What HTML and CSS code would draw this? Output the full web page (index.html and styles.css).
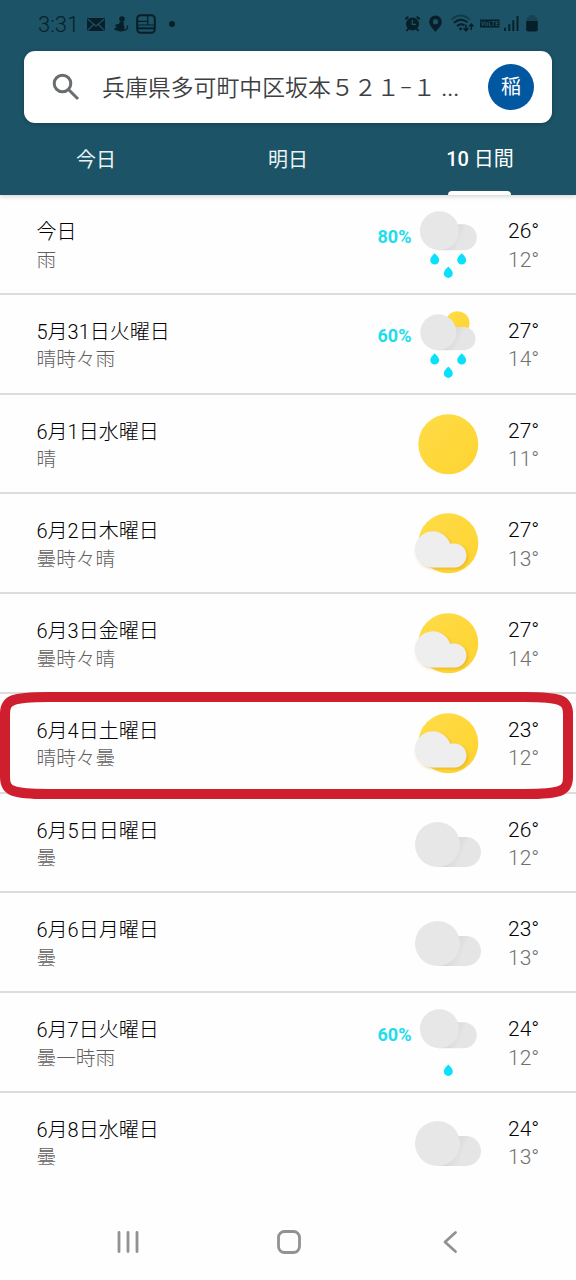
FILE: index.html
```html
<!DOCTYPE html>
<html lang="ja">
<head>
    <meta charset="UTF-8">
    <meta name="viewport" content="width=device-width, initial-scale=1.0">
    <title>天気 - 10 日間</title>
    <link rel="stylesheet" href="styles.css">
</head>
<body>
    <!-- Shared weather icons -->
    <svg class="defs" width="0" height="0">
        <defs>
            <linearGradient id="sun-fill" x1="0" y1="0" x2="1" y2="1">
                <stop offset="0" stop-color="#ffdc48"/>
                <stop offset="1" stop-color="#fdd32f"/>
            </linearGradient>
            <linearGradient id="puff-fill" x1="0" y1="0" x2="1" y2="0.3">
                <stop offset="0.45" stop-color="#d9d9d9"/>
                <stop offset="0.7" stop-color="#e5e5e5"/>
            </linearGradient>
            <filter id="soft" x="-20%" y="-20%" width="150%" height="150%">
                <feDropShadow dx="1.5" dy="1.5" stdDeviation="1.5" flood-color="#d08a00" flood-opacity="0.4"/>
            </filter>
            <path id="drop" fill="#0ae0fa" d="M0-5.800C1.600-4 4.500-1.600 4.500 1.100A4.500 4.500 0 0 1-4.500 1.100C-4.500-1.600-1.600-4 0-5.800Z"/>
            <g id="rain-cloud">
                <path fill="url(#puff-fill)" d="M27 55.300V29.200H51.700A13 13 0 0 1 51.700 55.300Z"/>
                <circle cx="27.400" cy="35.800" r="19.500" fill="#e7e7e7"/>
            </g>
        </defs>
        <symbol id="rain" viewBox="0 0 72 98">
            <use href="#rain-cloud"/>
            <use href="#drop" x="22.700" y="64"/>
            <use href="#drop" x="49.700" y="64"/>
            <use href="#drop" x="36.300" y="77.300"/>
        </symbol>
        <symbol id="light-rain" viewBox="0 0 72 98">
            <use href="#rain-cloud"/>
            <use href="#drop" x="36.300" y="77.300"/>
        </symbol>
        <symbol id="sun-rain" viewBox="0 0 72 98">
            <circle cx="45.500" cy="28.200" r="12" fill="url(#sun-fill)"/>
            <path fill="url(#puff-fill)" d="M26 55.300V32H53A11.700 11.700 0 0 1 53 55.300Z"/>
            <circle cx="26.300" cy="37.300" r="18" fill="#e7e7e7"/>
            <use href="#drop" x="22.700" y="64"/>
            <use href="#drop" x="49.700" y="64"/>
            <use href="#drop" x="36.300" y="77.300"/>
        </symbol>
        <symbol id="sun" viewBox="0 0 72 98">
            <circle cx="36.300" cy="49.300" r="30" fill="url(#sun-fill)"/>
        </symbol>
        <symbol id="sun-cloud" viewBox="0 0 72 98">
            <circle cx="36.300" cy="49.300" r="30" fill="url(#sun-fill)"/>
            <path fill="#eee" filter="url(#soft)" d="M21 73.400A18 18 0 1 1 38 49.800Q40 49.400 42.400 49.400A12 12 0 0 1 42.400 73.400Z"/>
        </symbol>
        <symbol id="cloud" viewBox="0 0 72 98">
            <path fill="url(#puff-fill)" d="M25 73V43H54A15 15 0 0 1 54 73Z"/>
            <circle cx="25.500" cy="50.500" r="22.500" fill="#e7e7e7"/>
        </symbol>
    </svg>

    <header class="header">
        <div class="status-bar">
            <div class="status-left">
                <span class="clock">3:31</span>
                <svg class="mail" width="18" height="13" viewBox="0 0 18 13">
                    <path d="M0 0H18V13H0Z" fill="currentColor"/>
                    <path d="M0.500 1L9 8L17.500 1M0.500 12.500L6.500 6.500M17.500 12.500L11.500 6.500" fill="none" stroke="#1c5367" stroke-width="1.100"/>
                </svg>
                <svg class="figure" width="15" height="16" viewBox="0 0 15 16">
                    <circle cx="8" cy="3" r="2.800" fill="currentColor"/>
                    <path d="M6 5.500L10 6Q9 8 10 9.500Q11.500 12 10 14.500Q8 16 4 15L0 13.500Q0.500 11.500 3 11L0.800 9.500Q2 7.500 5 8Z" fill="currentColor"/>
                    <path d="M9 14Q14 15 13.500 9.500" fill="none" stroke="currentColor" stroke-width="1.400"/>
                </svg>
                <svg class="news" width="20" height="20" viewBox="0 0 20 20" fill="none" stroke="currentColor">
                    <rect x="1.200" y="1.200" width="17.600" height="17.600" rx="3.500" stroke-width="2"/>
                    <path d="M1 14.300H19" stroke-width="2"/>
                    <path d="M11.800 2V11.500M2 7.300H11.500M2 11H18" stroke-width="1.200"/>
                </svg>
                <span class="more-dot"></span>
            </div>
            <svg class="status-right" width="136" height="20" viewBox="0 0 136 20" fill="none" stroke="currentColor">
                <!-- alarm -->
                <circle cx="8.500" cy="10" r="6.500" fill="currentColor" stroke="none"/>
                <path d="M1.300 5.300L4.300 2.800M12.700 2.800L15.700 5.300M4.500 14.500L2.500 17M12.500 14.500L14.500 17" stroke-width="2"/>
                <path d="M8.300 6V10.300H12" stroke="#1c5367" stroke-width="1.300"/>
                <!-- location -->
                <path fill="currentColor" stroke="none" fill-rule="evenodd" d="M31.500 1.500A6.300 6.300 0 0 1 37.800 7.800C37.800 11.500 34 15 31.500 18C29 15 25.200 11.500 25.200 7.800A6.300 6.300 0 0 1 31.500 1.500ZM31.500 5.100A2.600 2.600 0 1 0 31.500 10.300A2.600 2.600 0 1 0 31.500 5.100Z"/>
                <!-- wifi -->
                <path d="M47.500 5.500Q56.500-2.500 66 5.500" stroke-width="1.900" opacity="0.450"/>
                <path d="M50 8.800Q56.500 2.800 63.500 8.300M53 12Q56.500 8.800 60.500 11.300" stroke-width="2"/>
                <circle cx="56.500" cy="14.800" r="1.500" fill="currentColor" stroke="none"/>
                <path d="M62 10.500V16.500M59.500 14L62 16.800L64.500 14M67.300 16V10.500M65 12.500L67.300 10L69.600 12.500" stroke-width="1.500"/>
                <!-- volte -->
                <path d="M76 5.500H95.500V13.500H76Z" fill="currentColor" stroke="none"/>
                <text class="volte" x="76.800" y="12.200" textLength="18" lengthAdjust="spacingAndGlyphs">VoLTE</text>
                <!-- signal -->
                <path d="M101 13.800V17M105.300 10.300V17M109.300 6.300V17M113.500 2V17" stroke-width="1.900"/>
                <!-- battery -->
                <path d="M122.500 8V4.500Q122.500 3 124.500 3H125V1.200H131V3H131.500Q133.500 3 133.500 4.500V8Z" fill="currentColor" stroke="none" opacity="0.300"/>
                <path d="M122.200 7H133.800V15.500Q133.800 17.500 131.800 17.500H124.200Q122.200 17.500 122.200 15.500Z" fill="currentColor" stroke="none"/>
            </svg>
        </div>

        <div class="search">
            <svg class="search-icon" width="28" height="28" viewBox="0 0 28 28" fill="none" stroke="#6a6d70" stroke-width="3">
                <circle cx="10.500" cy="10.500" r="8.300"/>
                <path d="M16.500 16.500L26 26"/>
            </svg>
            <span class="place">兵庫県多可町中区坂本５２１−１ <span class="dots">...</span></span>
            <span class="avatar">稲</span>
        </div>

        <nav class="tabs">
            <span class="tab">今日</span>
            <span class="tab">明日</span>
            <span class="tab active"><span><b>10</b> 日間</span></span>
        </nav>
    </header>

    <main class="forecast">
        <div class="day">
            <div class="label"><div class="date">今日</div><div class="sky">雨</div></div>
            <span class="chance">80%</span>
            <svg class="icon"><use href="#rain"/></svg>
            <div class="temps"><div class="high">26°</div><div class="low">12°</div></div>
        </div>
        <div class="day">
            <div class="label"><div class="date">5月31日火曜日</div><div class="sky">晴時々雨</div></div>
            <span class="chance">60%</span>
            <svg class="icon"><use href="#sun-rain"/></svg>
            <div class="temps"><div class="high">27°</div><div class="low">14°</div></div>
        </div>
        <div class="day">
            <div class="label"><div class="date">6月1日水曜日</div><div class="sky">晴</div></div>
            <span class="chance"></span>
            <svg class="icon"><use href="#sun"/></svg>
            <div class="temps"><div class="high">27°</div><div class="low">11°</div></div>
        </div>
        <div class="day">
            <div class="label"><div class="date">6月2日木曜日</div><div class="sky">曇時々晴</div></div>
            <span class="chance"></span>
            <svg class="icon"><use href="#sun-cloud"/></svg>
            <div class="temps"><div class="high">27°</div><div class="low">13°</div></div>
        </div>
        <div class="day">
            <div class="label"><div class="date">6月3日金曜日</div><div class="sky">曇時々晴</div></div>
            <span class="chance"></span>
            <svg class="icon"><use href="#sun-cloud"/></svg>
            <div class="temps"><div class="high">27°</div><div class="low">14°</div></div>
        </div>
        <div class="day marked">
            <div class="label"><div class="date">6月4日土曜日</div><div class="sky">晴時々曇</div></div>
            <span class="chance"></span>
            <svg class="icon"><use href="#sun-cloud"/></svg>
            <div class="temps"><div class="high">23°</div><div class="low">12°</div></div>
            <svg class="frame" width="573" height="107" viewBox="0 0 573 107">
                <path d="M5 22C5 8 12 5 48 5H525C561 5 568 8 568 22V85C568 99 561 102 525 102H48C12 102 5 99 5 85Z"/>
            </svg>
        </div>
        <div class="day">
            <div class="label"><div class="date">6月5日日曜日</div><div class="sky">曇</div></div>
            <span class="chance"></span>
            <svg class="icon"><use href="#cloud"/></svg>
            <div class="temps"><div class="high">26°</div><div class="low">12°</div></div>
        </div>
        <div class="day">
            <div class="label"><div class="date">6月6日月曜日</div><div class="sky">曇</div></div>
            <span class="chance"></span>
            <svg class="icon"><use href="#cloud"/></svg>
            <div class="temps"><div class="high">23°</div><div class="low">13°</div></div>
        </div>
        <div class="day">
            <div class="label"><div class="date">6月7日火曜日</div><div class="sky">曇一時雨</div></div>
            <span class="chance">60%</span>
            <svg class="icon"><use href="#light-rain"/></svg>
            <div class="temps"><div class="high">24°</div><div class="low">12°</div></div>
        </div>
        <div class="day">
            <div class="label"><div class="date">6月8日水曜日</div><div class="sky">曇</div></div>
            <span class="chance"></span>
            <svg class="icon"><use href="#cloud"/></svg>
            <div class="temps"><div class="high">24°</div><div class="low">13°</div></div>
        </div>
    </main>

    <footer class="nav-bar">
        <svg width="24" height="24" viewBox="0 0 24 24"><path d="M3 2.500V21.500M12 2.500V21.500M21 2.500V21.500"/></svg>
        <svg width="24" height="24" viewBox="0 0 24 24"><rect x="1.500" y="1.500" width="21" height="21" rx="6"/></svg>
        <svg width="24" height="24" viewBox="0 0 24 24"><path d="M16.500 2.500L6 12L16.500 21.500"/></svg>
    </footer>
</body>
</html>
```
FILE: styles.css
```css
* {
    box-sizing: border-box;
}
body {
    margin: 0;
    height: 1280px;
    display: flex;
    flex-direction: column;
    background-color: #fefefe;
    color: #202124;
    font-family: Roboto, "Noto Sans CJK JP", sans-serif;
    font-size: 20px;
    overflow: hidden;
}
.defs {
    position: absolute;
}
.header {
    height: 195px;
    flex: none;
    background-color: #1c5367;
    box-shadow: 0 1px 5px rgba(0, 0, 0, 0.2);
}
.status-bar {
    height: 51px;
    padding: 0 36px 3px 38px;
    display: flex;
    align-items: center;
    justify-content: space-between;
    color: #071f29;
}
.status-left {
    display: flex;
    align-items: center;
}
.clock {
    width: 49px;
    font-size: 22px;
    font-weight: 300;
    line-height: 48px;
    padding-top: 2px;
}
.figure {
    margin-left: 9px;
}
.news {
    margin-left: 7px;
}
.more-dot {
    width: 6px;
    height: 6px;
    margin-left: 13px;
    border-radius: 50%;
    background-color: #071f29;
}
.volte {
    font-size: 7.5px;
    font-weight: bold;
    fill: #1c5367;
    stroke: none;
}
.search {
    height: 72px;
    margin: 0 24px;
    padding: 0 18px 0 28px;
    display: flex;
    align-items: center;
    border-radius: 11px;
    background-color: #fff;
    box-shadow: 0 1px 4px rgba(0, 0, 0, 0.25);
}
.place {
    flex: 1;
    padding: 4px 0 0 22px;
    color: #3c4043;
    font-size: 22.9px;
    font-weight: 350;
    line-height: 34px;
    white-space: nowrap;
}
.dots {
    font-weight: 400;
}
.avatar {
    width: 46px;
    height: 46px;
    border-radius: 50%;
    background-color: #0157a0;
    color: #fff;
    font-size: 20px;
    line-height: 46px;
    text-align: center;
}
.tabs {
    height: 72px;
    display: grid;
    grid-template-columns: repeat(3, 1fr);
    justify-items: center;
    color: #e8f3f5;
}
.tab {
    height: 72px;
    display: flex;
    flex-direction: column;
    justify-content: space-between;
    line-height: 74px;
}
.active {
    align-items: center;
    color: #fff;
    line-height: 73px;
}
.active span {
    height: 68px;
}
.active b {
    font-weight: 500;
}
.active::after {
    content: "";
    width: 63px;
    height: 4px;
    flex: none;
    border-radius: 4px 4px 0 0;
    background-color: #fff;
}
.forecast {
    flex: none;
}
.day {
    height: 99.75px;
    padding-left: 36.5px;
    display: grid;
    grid-template-columns: 341px 34.5px 72px 1fr;
    border-bottom: 2px solid #dcdcdc;
}
.day:last-child {
    border-bottom: none;
}
.label {
    padding-top: 23px;
    font-weight: 300;
    line-height: 28.5px;
}
.date {
    color: #000;
}
.sky {
    color: #606060;
    font-size: 19.7px;
}
.chance {
    padding-top: 29.5px;
    color: #22dcec;
    font-size: 18px;
    font-weight: 700;
    line-height: 24px;
}
.icon {
    width: 72px;
    height: 98px;
}
.temps {
    padding: 22px 0 0 24px;
    font-size: 21px;
    line-height: 28.5px;
}
.high {
    color: #000;
    font-weight: 300;
}
.low {
    color: #707070;
    font-weight: 300;
}
/* Red frame around the picked day, drawn over the row lines */
.marked {
    position: relative;
}
.frame {
    position: absolute;
    top: -2px;
    left: 0;
    fill: none;
    stroke: #cf1e2e;
    stroke-width: 10;
}
.nav-bar {
    flex: 1;
    padding: 37px 44.5px 0 47px;
    display: grid;
    grid-template-columns: repeat(3, 1fr);
    justify-items: center;
    fill: none;
    stroke: #929292;
    stroke-width: 2.8;
    stroke-linecap: round;
    stroke-linejoin: round;
}
```
